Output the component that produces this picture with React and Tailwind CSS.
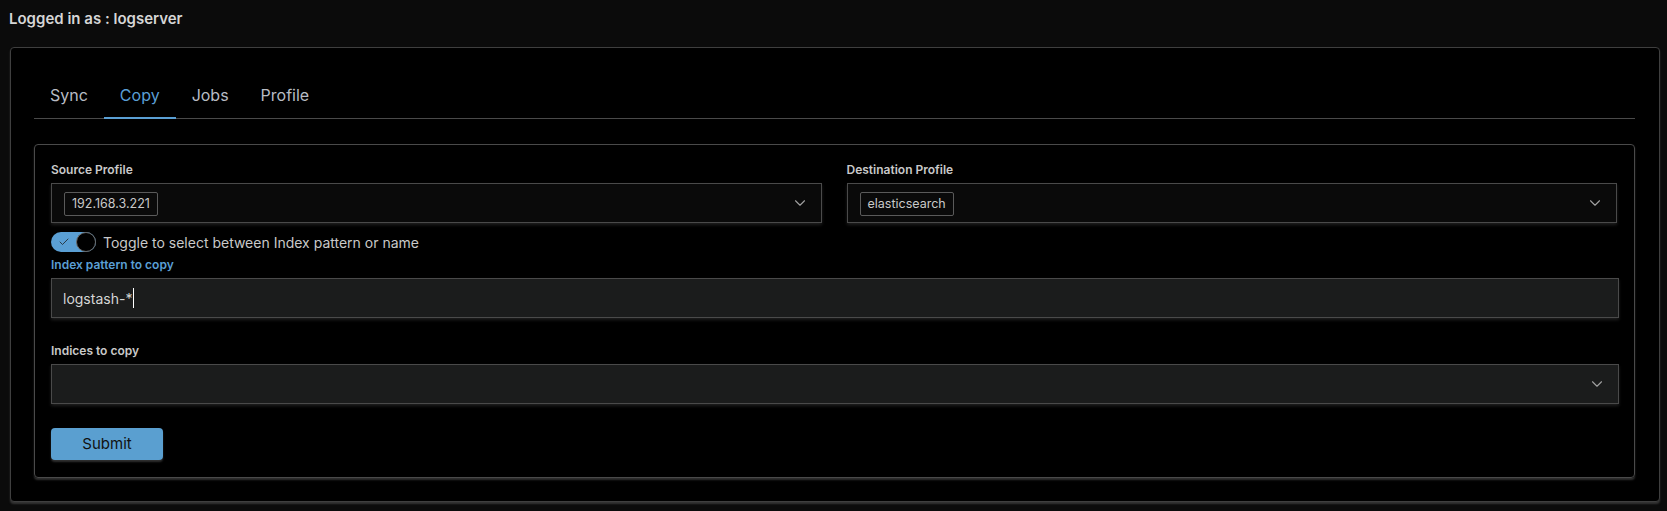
import { ChevronDown, Check } from 'lucide-react';

const font = { fontFamily: 'Inter, "Liberation Sans", sans-serif' };

function Tab({ label, active }) {
  return (
    <button
      className={
        'h-[47px] pt-px px-4 text-[16px] -mb-px border-b-2 ' +
        (active ? 'text-[#5a9fd4] border-[#5a9fd4]' : 'text-[#b8bcc4] border-transparent')
      }
    >
      {label}
    </button>
  );
}

function Label({ children, blue }) {
  return (
    <div className={'text-[12px] font-semibold leading-4 ' + (blue ? 'text-[#5a9fd4]' : 'text-[#c9c9c9]')}>
      {children}
    </div>
  );
}

function Select({ tag, filled }) {
  return (
    <div
      className={
        'h-[40px] flex items-center justify-between pl-3 pr-3 border border-[#4a4a4a] shadow-[0_2px_3px_rgba(60,60,60,0.5)] ' +
        (filled ? 'bg-[#1b1c1c]' : 'bg-[#0a0a0a]')
      }
    >
      <div>
        {tag && (
          <span className="inline-flex items-center h-[24px] px-[7px] border border-[#5a5a5a] rounded-[2px] text-[12.5px] text-[#c9c9c9]">
            {tag}
          </span>
        )}
      </div>
      <ChevronDown size={18} strokeWidth={1.5} className="text-[#a0a0a0]" />
    </div>
  );
}

export default function App() {
  return (
    <div className="min-h-screen bg-[#0b0b0b] pb-[11px]" style={font}>
      <div className="h-[47px] pl-[9px] pt-[8px] text-[15px] font-semibold text-[#d6d6d6]">
        Logged in as : logserver
      </div>

      <div className="mx-[10px] w-[1650px] bg-black border border-[#3f3f3f] rounded-[4px] shadow-[0_2px_2px_rgba(80,80,80,0.6)] pl-[23px] pr-[24px] pt-[24px] pb-[23px]">
        <div className="flex border-b border-[#4a4a4a]">
          <Tab label="Sync" />
          <Tab label="Copy" active />
          <Tab label="Jobs" />
          <Tab label="Profile" />
        </div>

        <div className="mt-[25px] border border-[#4a4a4a] rounded-[4px] shadow-[0_2px_2px_rgba(80,80,80,0.6)] pl-[16px] pr-[15px] pt-[17px] pb-[17px]">
          <div className="grid grid-cols-2 gap-[25px] pr-[2px]">
            <div>
              <Label>Source Profile</Label>
              <div className="mt-[5px]">
                <Select tag="192.168.3.221" />
              </div>
            </div>
            <div>
              <Label>Destination Profile</Label>
              <div className="mt-[5px]">
                <Select tag="elasticsearch" />
              </div>
            </div>
          </div>

          <div className="flex items-center gap-[7px] mt-[9px] h-[20px]">
            <div className="relative w-[45px] h-[20px] rounded-full bg-[#5a9fd4] flex items-center">
              <Check size={12} strokeWidth={1.5} className="ml-[7px] text-[#1a1a1a]" />
              <div className="absolute right-0 top-0 w-[20px] h-[20px] rounded-full bg-black border border-[#6a6a6a]" />
            </div>
            <span className="text-[14px] text-[#c9c9c9]">Toggle to select between Index pattern or name</span>
          </div>

          <div className="mt-[5px]">
            <Label blue>Index pattern to copy</Label>
          </div>
          <div className="mt-[5px] h-[40px] flex items-center px-[11px] bg-[#1b1c1c] border border-[#4a4a4a] shadow-[0_2px_3px_rgba(60,60,60,0.5)]">
            <span className="text-[14px] text-[#d6d6d6]">logstash-*</span>
            <span className="w-px h-[20px] bg-white ml-px" />
          </div>

          <div className="mt-[25px]">
            <Label>Indices to copy</Label>
          </div>
          <div className="mt-[5px]">
            <Select filled />
          </div>

          <button className="mt-[24px] w-[112px] h-[32px] rounded-[4px] bg-[#5a9fd0] text-[15px] text-[#111] shadow-[0_2px_2px_rgba(80,80,80,0.6)]">
            Submit
          </button>
        </div>
      </div>
    </div>
  );
}
